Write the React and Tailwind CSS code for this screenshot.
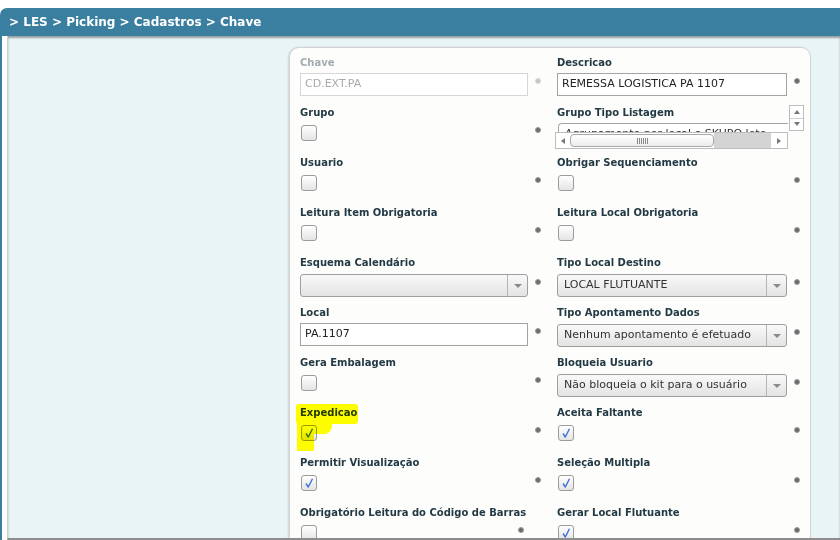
import React from "react";

const font = { fontFamily: '"DejaVu Sans", Verdana, sans-serif' };

const Dot = ({ light, className = "" }) => (
  <span
    className={`block w-[6px] h-[6px] rounded-full shrink-0 ${
      light ? "bg-[#c4c4c4] border border-[#d8d8d8]" : "bg-[#6b6b6b] border border-[#9a9a9a]"
    } ${className}`}
  />
);

const Check = ({ color = "#3d6fd8" }) => (
  <svg width="14" height="14" viewBox="0 0 14 14" className="block">
    <path d="M4 7.5 L6.3 11 L10.5 2.8" fill="none" stroke={color} strokeWidth="1.4" strokeLinejoin="round" />
  </svg>
);

const Checkbox = ({ checked }) => (
  <div className="w-[16px] h-[16px] rounded-[3px] border border-[#9c9c9c] bg-gradient-to-b from-white to-[#e4e4e4] flex items-center justify-center shrink-0">
    {checked && <Check />}
  </div>
);

const Arrow = () => (
  <div className="w-[20px] self-stretch border-l border-[#b5b5b5] flex items-center justify-center">
    <span className="block w-0 h-0 border-l-[4px] border-r-[4px] border-t-[4px] border-l-transparent border-r-transparent border-t-[#8a8a8a]" />
  </div>
);

const Select = ({ value, w }) => (
  <div
    className={`h-[23px] ${w} rounded-[3px] border border-[#9f9f9f] bg-gradient-to-b from-[#f9f9f9] to-[#e3e3e3] flex items-center`}
  >
    <span className="flex-1 pl-[6px] text-[11px] text-[#333] truncate">{value}</span>
    <Arrow />
  </div>
);

const Input = ({ value, w, disabled }) => (
  <div
    className={`h-[23px] ${w} border ${
      disabled ? "border-[#d6d6d6] text-[#a9a9a9]" : "border-[#a4a4a4] text-[#222]"
    } bg-white flex items-center pl-[4px] text-[11px]`}
  >
    {value}
  </div>
);

const Cell = ({ label, disabled, children, type, w, noDot, highlight }) => {
  const mt = type === "cb" ? "mt-[5px]" : type === "select" ? "mt-[4px]" : "mt-[3px]";
  const dotMt = type === "cb" ? "mt-[2px]" : "mt-[5px]";
  return (
    <div className="relative h-[50px] flex flex-col">
      <div className={`h-[14px] leading-[14px] text-[10px] font-bold ${disabled ? "text-[#a3acaf]" : "text-[#233a45]"}`}>
        {label}
      </div>
      <div className={`flex items-start ${mt}`}>
        <div className={`${w} shrink-0 ${type === "cb" ? "pl-[1px]" : ""}`}>{children}</div>
        {!noDot && <Dot light={disabled} className={`ml-[7px] ${dotMt}`} />}
      </div>
      {highlight && (
        <>
          <span className="absolute left-[-4px] top-[-2px] w-[62px] h-[20px] rounded-[3px] bg-[#ffff00] mix-blend-multiply" />
          <span className="absolute left-[-3px] top-[16px] w-[35px] h-[12px] rounded-br-[8px] bg-[#ffff00] mix-blend-multiply" />
          <span className="absolute left-[-3px] top-[28px] w-[17px] h-[17px] bg-[#ffff00] mix-blend-multiply" />
        </>
      )}
    </div>
  );
};

const ListBox = () => (
  <div className="relative h-[50px]">
    <div className="h-[14px] leading-[14px] text-[10px] font-bold text-[#233a45]">Grupo Tipo Listagem</div>
    <div className="absolute left-[232px] top-[-1px] w-[15px] h-[26px] border border-[#bdbdbd] bg-white flex flex-col">
      <div className="flex-1 flex items-center justify-center border-b border-[#cfcfcf]">
        <span className="block w-0 h-0 border-l-[3px] border-r-[3px] border-b-[4px] border-l-transparent border-r-transparent border-b-[#777]" />
      </div>
      <div className="flex-1 flex items-center justify-center">
        <span className="block w-0 h-0 border-l-[3px] border-r-[3px] border-t-[4px] border-l-transparent border-r-transparent border-t-[#777]" />
      </div>
    </div>
    <div className="absolute left-[1px] top-[17px] w-[230px] h-[9px] overflow-hidden border-t border-l border-[#a4a4a4] rounded-tl-[4px] bg-white">
      <div className="pl-[6px] pt-[4px] text-[11px] leading-[12px] text-[#333] whitespace-nowrap">
        Agrupamento por local e SKUPO lote
      </div>
    </div>
    <div className="absolute left-[-2px] top-[26px] w-[233px] h-[17px] border border-[#bdbdbd] bg-white flex items-stretch">
      <div className="w-[14px] flex items-center justify-center">
        <span className="block w-0 h-0 border-t-[3px] border-b-[3px] border-r-[4px] border-t-transparent border-b-transparent border-r-[#777]" />
      </div>
      <div className="w-[144px] my-[1px] rounded-[4px] border border-[#a9a9a9] bg-gradient-to-b from-white to-[#ececec] flex items-center justify-center">
        <svg width="11" height="6" viewBox="0 0 11 6" className="block">
          <path d="M0.5 0V6M2.5 0V6M4.5 0V6M6.5 0V6M8.5 0V6M10.5 0V6" stroke="#8a8a8a" strokeWidth="1" />
        </svg>
      </div>
      <div className="flex-1 bg-[#d4d4d4]" />
      <div className="w-[16px] flex items-center justify-center">
        <span className="block w-0 h-0 border-t-[3px] border-b-[3px] border-l-[4px] border-t-transparent border-b-transparent border-l-[#777]" />
      </div>
    </div>
  </div>
);

export default function App() {
  const lw = "w-[228px]";
  const rw = "w-[230px]";
  return (
    <div className="w-[840px] h-[540px] bg-white pt-[8px] overflow-hidden" style={font}>
      <div className="h-[28px] bg-[#3a7fa0] rounded-tl-[7px] flex items-center pl-[9px] text-white font-bold text-[12px]">
        &gt; LES &gt; Picking &gt; Cadastros &gt; Chave
      </div>
      <div className="flex h-[504px]">
        <div className="w-[2px] bg-[#3a7fa0]" />
        <div className="w-[5px] bg-white" />
        <div className="flex-1 bg-[#e9f4f6] border-l border-[#c9cfd1] border-b-2 border-b-[#8d8d8d] shadow-[inset_0_2px_2px_rgba(0,0,0,0.35)] overflow-hidden pt-[11px]">
          <div className="ml-[281px] w-[522px] h-[520px] bg-[#fdfdfc] border border-[#d2d2d2] rounded-t-[10px] shadow-[-1px_0_2px_rgba(0,0,0,0.12)] pt-[8px] pl-[10px] grid grid-cols-[257px_255px]">
            <div className="flex flex-col">
              <Cell label="Chave" disabled type="input" w={lw}>
                <Input value="CD.EXT.PA" w={lw} disabled />
              </Cell>
              <Cell label="Grupo" type="cb" w={lw}><Checkbox /></Cell>
              <Cell label="Usuario" type="cb" w={lw}><Checkbox /></Cell>
              <Cell label="Leitura Item Obrigatoria" type="cb" w={lw}><Checkbox /></Cell>
              <Cell label="Esquema Calendário" type="select" w={lw}>
                <Select value="" w={lw} />
              </Cell>
              <Cell label="Local" type="input" w={lw}>
                <Input value="PA.1107" w={lw} />
              </Cell>
              <Cell label="Gera Embalagem" type="cb" w={lw}><Checkbox /></Cell>
              <Cell label="Expedicao" type="cb" w={lw} highlight><Checkbox checked /></Cell>
              <Cell label="Permitir Visualização" type="cb" w={lw}><Checkbox checked /></Cell>
              <Cell label="Obrigatório Leitura do Código de Barras" type="cb" w="w-[211px]"><Checkbox /></Cell>
            </div>
            <div className="flex flex-col">
              <Cell label="Descricao" type="input" w={rw}>
                <Input value="REMESSA LOGISTICA PA 1107" w={rw} />
              </Cell>
              <ListBox />
              <Cell label="Obrigar Sequenciamento" type="cb" w={rw}><Checkbox /></Cell>
              <Cell label="Leitura Local Obrigatoria" type="cb" w={rw}><Checkbox /></Cell>
              <Cell label="Tipo Local Destino" type="select" w={rw}>
                <Select value="LOCAL FLUTUANTE" w={rw} />
              </Cell>
              <Cell label="Tipo Apontamento Dados" type="select" w={rw}>
                <Select value="Nenhum apontamento é efetuado" w={rw} />
              </Cell>
              <Cell label="Bloqueia Usuario" type="select" w={rw}>
                <Select value="Não bloqueia o kit para o usuário" w={rw} />
              </Cell>
              <Cell label="Aceita Faltante" type="cb" w={rw}><Checkbox checked /></Cell>
              <Cell label="Seleção Multipla" type="cb" w={rw}><Checkbox checked /></Cell>
              <Cell label="Gerar Local Flutuante" type="cb" w={rw}><Checkbox checked /></Cell>
            </div>
          </div>
        </div>
      </div>
    </div>
  );
}
